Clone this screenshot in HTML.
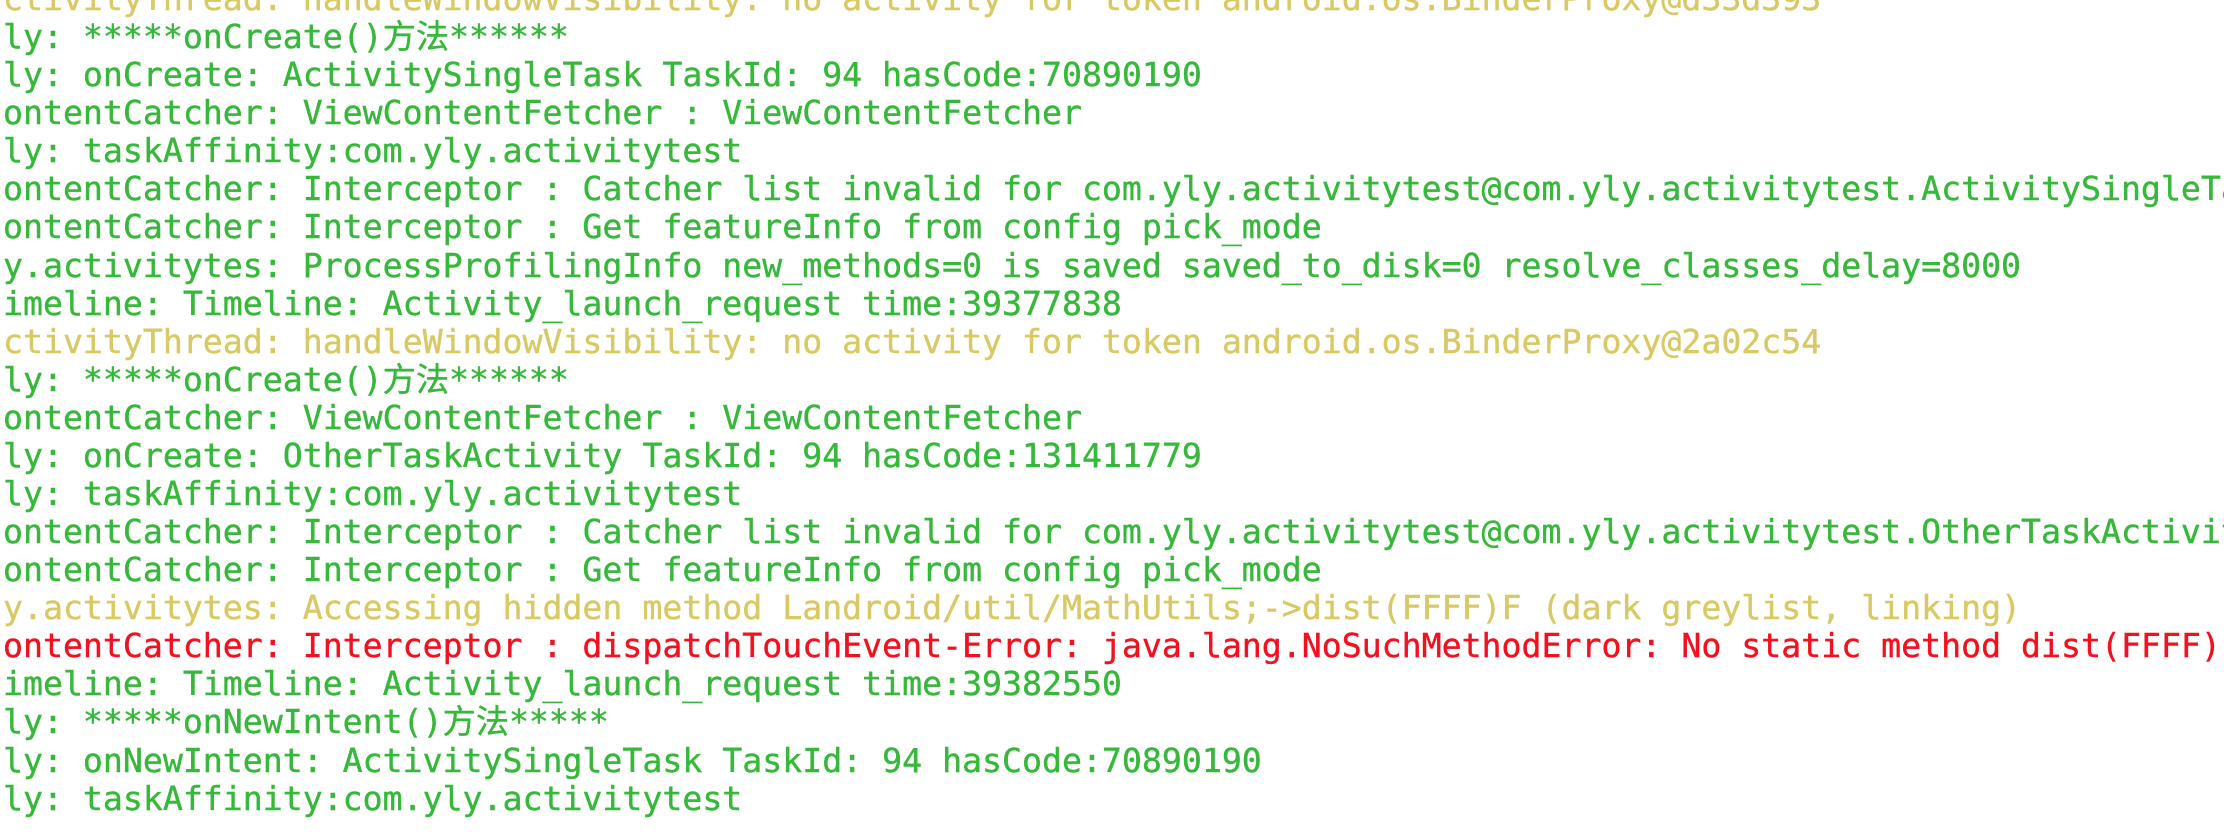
<!DOCTYPE html>
<html><head><meta charset="utf-8"><style>
html,body{margin:0;padding:0;background:#fff;width:2224px;height:838px;overflow:hidden}
pre{margin:0;position:absolute;left:3px;top:-20px;font-family:"DejaVu Sans Mono","Liberation Mono","Noto Sans CJK SC",monospace;font-size:33.2px;line-height:38.08px;white-space:pre;color:#36b83a;-webkit-text-stroke:0.4px currentColor}
.y{color:#d8c964}.r{color:#f2111e}
</style></head><body>
<pre><span class="y">ctivityThread: handleWindowVisibility: no activity for token android.os.BinderProxy@d33d393</span>
ly: *****onCreate()方法******
ly: onCreate: ActivitySingleTask TaskId: 94 hasCode:70890190
ontentCatcher: ViewContentFetcher : ViewContentFetcher
ly: taskAffinity:com.yly.activitytest
ontentCatcher: Interceptor : Catcher list invalid for com.yly.activitytest@com.yly.activitytest.ActivitySingleTask
ontentCatcher: Interceptor : Get featureInfo from config pick_mode
y.activitytes: ProcessProfilingInfo new_methods=0 is saved saved_to_disk=0 resolve_classes_delay=8000
imeline: Timeline: Activity_launch_request time:39377838
<span class="y">ctivityThread: handleWindowVisibility: no activity for token android.os.BinderProxy@2a02c54</span>
ly: *****onCreate()方法******
ontentCatcher: ViewContentFetcher : ViewContentFetcher
ly: onCreate: OtherTaskActivity TaskId: 94 hasCode:131411779
ly: taskAffinity:com.yly.activitytest
ontentCatcher: Interceptor : Catcher list invalid for com.yly.activitytest@com.yly.activitytest.OtherTaskActivity
ontentCatcher: Interceptor : Get featureInfo from config pick_mode
<span class="y">y.activitytes: Accessing hidden method Landroid/util/MathUtils;-&gt;dist(FFFF)F (dark greylist, linking)</span>
<span class="r">ontentCatcher: Interceptor : dispatchTouchEvent-Error: java.lang.NoSuchMethodError: No static method dist(FFFF)F</span>
imeline: Timeline: Activity_launch_request time:39382550
ly: *****onNewIntent()方法*****
ly: onNewIntent: ActivitySingleTask TaskId: 94 hasCode:70890190
ly: taskAffinity:com.yly.activitytest</pre>
</body></html>
